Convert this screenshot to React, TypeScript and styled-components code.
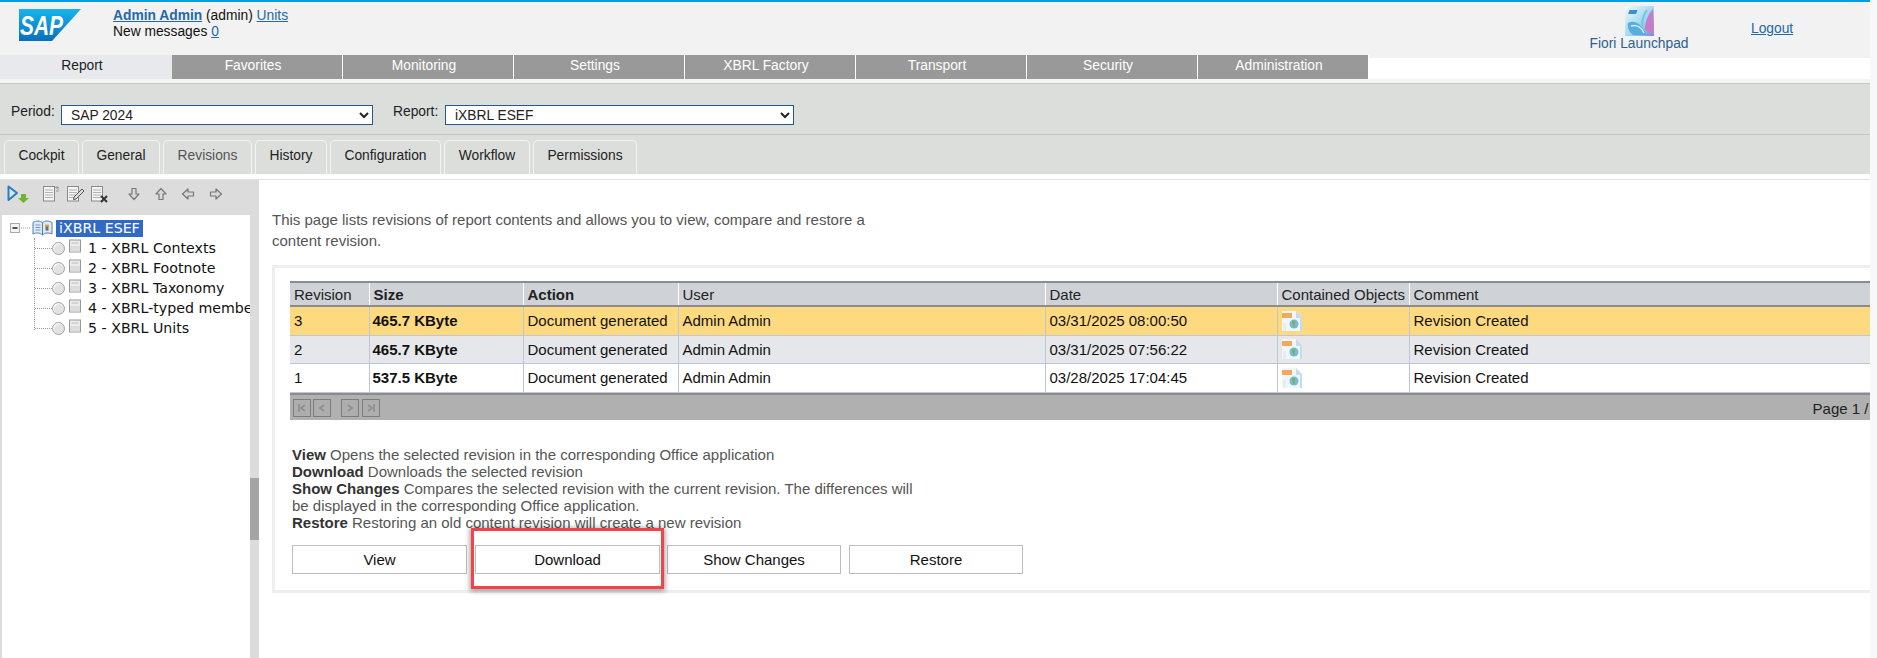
import React from "react";
import styled, { createGlobalStyle } from "styled-components";

const Global = createGlobalStyle`
  html, body { margin: 0; padding: 0; background: #fff; overflow: hidden; }
  #root { width: 1877px; height: 658px; }
  * { box-sizing: border-box; }
`;

const Screen = styled.div`
  display: flex;
  width: 1877px;
  height: 658px;
  overflow: hidden;
  font-family: "Liberation Sans", Arial, sans-serif;
  font-size: 13.8px;
  color: #111;
`;
const Page = styled.div`
  display: flex;
  flex-direction: column;
  width: 1870px;
  height: 658px;
  overflow: hidden;
`;
const PageScroll = styled.div`
  width: 7px;
  background: #f8f8f8;
`;

const Header = styled.header`
  display: flex;
  height: 55px;
  flex: none;
  border-top: 2px solid #009de0;
  background: #f2f2f2;
`;
const LogoBox = styled.div`
  width: 113px;
  padding: 7px 0 0 19px;
`;
const UserBox = styled.div`
  padding-top: 6px;
  line-height: 16px;
  flex: 1;
`;
const Link = styled.a<{ $bold?: boolean }>`
  color: #2368a8;
  text-decoration: underline;
  font-weight: ${(p) => (p.$bold ? 700 : 400)};
`;
const FioriBox = styled.div`
  display: flex;
  flex-direction: column;
  align-items: center;
  width: 98px;
  padding-top: 4px;
  margin-right: 63px;
  color: #2d5f92;
  line-height: 15px;
  white-space: nowrap;
`;
const LogoutBox = styled.div`
  width: 119px;
  padding-top: 19px;
  line-height: 16px;
`;

const MainTabs = styled.nav`
  display: flex;
  height: 24px;
  flex: none;
`;
const MainTab = styled.div<{ $active?: boolean }>`
  width: ${(p) => (p.$active ? "172px" : "170px")};
  margin-right: ${(p) => (p.$active ? 0 : "1px")};
  padding-right: 8px;
  background: ${(p) => (p.$active ? "#e8e9ec" : "#999999")};
  color: ${(p) => (p.$active ? "#222" : "#fff")};
  text-align: center;
  line-height: 22px;
`;
const TabFiller = styled.div`
  flex: 1;
  background: #fff;
  border-top: 3px solid #f2f2f2;
`;
const TabStrip = styled.div`
  height: 5px;
  flex: none;
  background: #f4f4f4;
  border-bottom: 1px solid #c6c8c8;
`;

const FilterBar = styled.div`
  display: flex;
  align-items: flex-start;
  height: 51px;
  flex: none;
  padding: 21px 0 0 11px;
  background: #dcdedc;
  border-bottom: 1px solid #c4c6c4;
`;
const FilterLabel = styled.label<{ $width: number }>`
  width: ${(p) => p.$width}px;
  margin-top: -1px;
  line-height: 15px;
  color: #222;
`;
const FilterSelect = styled.select<{ $width: number; $gap?: number }>`
  width: ${(p) => p.$width}px;
  height: 20px;
  margin-right: ${(p) => p.$gap ?? 0}px;
  padding: 0 0 0 5px;
  border: 1px solid #23598f;
  border-radius: 0;
  background-color: #fff;
  font-family: "Liberation Sans", Arial, sans-serif;
  font-size: 13.8px;
  color: #222;
`;

const SubTabBar = styled.div`
  display: flex;
  gap: 3px;
  height: 39px;
  flex: none;
  padding: 5px 0 0 4px;
  background: #dcdedc;
`;
const SubTab = styled.div<{ $width: number; $active?: boolean }>`
  width: ${(p) => p.$width}px;
  border: 1px solid #f3f3f3;
  border-bottom: none;
  border-radius: 5px 5px 0 0;
  text-align: center;
  line-height: 30px;
  color: ${(p) => (p.$active ? "#555" : "#222")};
`;
const SubStrip = styled.div`
  height: 6px;
  flex: none;
  background: #fff;
  border-bottom: 1px solid #e3e3e3;
`;

const Body = styled.div`
  display: flex;
  flex: 1;
  min-height: 0;
`;
const Sidebar = styled.aside`
  display: flex;
  flex-direction: column;
  width: 250px;
  flex: none;
  padding-left: 2px;
  background: #dcdcdc;
`;
const Toolbar = styled.div`
  display: flex;
  align-items: center;
  height: 33px;
  flex: none;
  padding: 0 0 6px 5px;
`;
const ToolGap = styled.span<{ $w: number }>`
  display: inline-block;
  width: ${(p) => p.$w}px;
`;
const Tree = styled.div`
  flex: 1;
  margin-top: 2px;
  padding-top: 3px;
  background: #fff;
  font-family: "DejaVu Sans", Verdana, sans-serif;
  font-size: 14.2px;
  overflow: hidden;
  white-space: nowrap;
`;
const TreeRoot = styled.div`
  display: flex;
  align-items: center;
  height: 20px;
  padding-left: 6px;
`;
const RootLabel = styled.span`
  margin-left: 3px;
  padding: 0 3px;
  height: 17px;
  line-height: 17px;
  background: #316ac5;
  color: #fff;
`;
const TreeChildren = styled.div`
  margin-left: 32px;
  border-left: 1px dotted #999;
  height: 92px;
`;
const TreeRow = styled.div`
  display: flex;
  align-items: center;
  height: 20px;
  color: #111;
`;
const Dots = styled.span`
  width: 17px;
  flex: none;
  border-top: 1px dotted #999;
`;
const Radio = styled.span`
  width: 13px;
  height: 13px;
  flex: none;
  border-radius: 50%;
  background: #e2e2e2;
  border: 1px solid #a2a2a2;
  box-shadow: inset 1px 1px 1px #fff;
`;
const RowIcon = styled.span`
  display: flex;
  flex: none;
  margin: 0 0 5px 3px;
`;
const RowLabel = styled.span`
  flex: none;
  margin-left: 6px;
`;
const ScrollTrack = styled.div`
  display: flex;
  flex-direction: column;
  width: 9px;
  flex: none;
  padding-top: 298px;
  background: #dcdcdc;
`;
const ScrollThumb = styled.div`
  height: 62px;
  background: #a4a4a4;
`;

const Main = styled.main`
  flex: 1;
  min-width: 0;
  padding: 29px 0 0 13px;
  overflow: hidden;
  font-size: 15px;
`;
const Intro = styled.p`
  width: 610px;
  margin: 0 0 14px;
  line-height: 21px;
  color: #555;
`;
const Card = styled.section`
  position: relative;
  width: 1640px;
  height: 328px;
  padding: 13px 0 0 15px;
  border: 3px solid #eeeeee;
`;
const GridTable = styled.table`
  width: 1600px;
  table-layout: fixed;
  border-collapse: collapse;
`;
const HeadRow = styled.tr`
  height: 24px;
  background: #cfd3d7;
  border-top: 2px solid #8c8c8c;
  border-bottom: 2px solid #8c8c8c;
`;
const HeadCell = styled.th<{ $bold?: boolean }>`
  padding: 0 4px;
  border-right: 1px solid #fff;
  text-align: left;
  font-weight: ${(p) => (p.$bold ? 700 : 400)};
  color: #222;
  white-space: nowrap;
`;
const DataRow = styled.tr<{ $bg: string; $h: number }>`
  height: ${(p) => p.$h}px;
  background: ${(p) => p.$bg};
  border-bottom: 1px solid #bcc6da;
`;
const Cell = styled.td<{ $bold?: boolean }>`
  padding: 0 4px 0 ${(p) => (p.$bold ? 3 : 4)}px;
  border-right: 1px solid #bcc6da;
  font-weight: ${(p) => (p.$bold ? 700 : 400)};
  color: #111;
  white-space: nowrap;
  svg { display: block; }
`;
const Pager = styled.div`
  display: flex;
  align-items: flex-start;
  width: 1600px;
  height: 27px;
  padding: 4px 9px 0 3px;
  background: #b0b0b0;
  border-top: 2px solid #8c8c8c;
`;
const PagerButton = styled.span<{ $gapRight: number }>`
  display: flex;
  align-items: center;
  justify-content: center;
  width: 18px;
  height: 18px;
  margin-right: ${(p) => p.$gapRight}px;
  border: 1px solid #7c7c7c;
  background: #aeaeae;
`;
const PageInfo = styled.span`
  margin-left: auto;
  margin-top: 1px;
  color: #222;
`;
const Help = styled.div`
  margin: 26px 0 14px 2px;
  width: 630px;
  line-height: 17px;
  color: #555;
`;
const HelpKey = styled.b`
  color: #333;
`;
const Buttons = styled.div`
  display: flex;
  margin-left: 2px;
`;
const ActionButton = styled.div<{ $width: number; $gap: number }>`
  width: ${(p) => p.$width}px;
  height: 29px;
  margin-right: ${(p) => p.$gap}px;
  border: 1px solid #bdbdbd;
  background: #fff;
  text-align: center;
  line-height: 27px;
  color: #111;
`;
const Highlight = styled.div`
  position: absolute;
  left: 196px;
  top: 260px;
  width: 193px;
  height: 61px;
  border: 3px solid #f44348;
  box-shadow: 0 1px 5px 1px rgba(0, 0, 0, 0.4);
`;

const SapLogo = () => (
  <svg width="63" height="33" viewBox="0 0 63 33">
    <defs>
      <linearGradient id="sapg" x1="0" y1="0" x2="0" y2="1">
        <stop offset="0" stopColor="#16b5ee" />
        <stop offset="1" stopColor="#0a6fbd" />
      </linearGradient>
    </defs>
    <polygon points="0,0 62,0 33,32 0,32" fill="url(#sapg)" />
    <text x="1" y="26" fontFamily="Liberation Sans" fontWeight="700" fontStyle="italic" fontSize="28" textLength="43" lengthAdjust="spacingAndGlyphs" fill="#fff">SAP</text>
  </svg>
);

const FioriIcon = () => (
  <svg width="29" height="30" viewBox="0 0 29 30">
    <defs>
      <linearGradient id="fg" x1="0" y1="0" x2="1" y2="1">
        <stop offset="0" stopColor="#f4fafc" />
        <stop offset="0.6" stopColor="#9ad4ec" />
        <stop offset="1" stopColor="#7d86d8" />
      </linearGradient>
    </defs>
    <rect width="29" height="30" fill="url(#fg)" />
    <path d="M3 17 C10 13 17 19 22 29 L8 29 C4 26 2 21 3 17Z" fill="#55aedd" />
    <path d="M6 20 C12 18 17 22 19 27" fill="none" stroke="#d6eef8" strokeWidth="1.5" />
    <path d="M20 24 C20 16 23 8 28 3 L29 28 Z" fill="#c77cc7" />
    <path d="M17 20 C17 13 19 8 22 4" fill="none" stroke="#6cc6e6" strokeWidth="2" />
    <rect x="4" y="4" width="8" height="4" fill="#3d8fc8" transform="skewX(-20) translate(2 0)" />
  </svg>
);

const PlayDown = () => (
  <svg width="24" height="18" viewBox="0 0 24 18">
    <path d="M1.5 1.5 L10 8 L1.5 15 Z" fill="#d5e6f5" stroke="#2c7fb8" strokeWidth="2" strokeLinejoin="round" />
    <path d="M14 9h5v4h3l-5.5 5-5.5-5h3z" fill="#6cb52d" />
  </svg>
);

const Sheet = ({ kind }: { kind: "new" | "edit" | "del" }) => (
  <svg width="19" height="18" viewBox="0 0 19 18">
    <rect x="1.5" y="1.5" width="11" height="14.5" fill="#f4f4f4" stroke="#8a8a8a" />
    <path d="M3.5 5h7M3.5 7.5h7M3.5 10h7M3.5 12.5h7" stroke="#707070" strokeWidth="1" strokeDasharray="1 1" />
    {kind === "new" && <path d="M15 1v3M13 2.5l4 0M14 6h3M17 3.5l-1.5 1.5" stroke="#9a9a9a" />}
    {kind === "edit" && <path d="M8 12 L16 4 L18 6 L10 14 L7.5 14.5 Z" fill="#dcdcdc" stroke="#555" />}
    {kind === "del" && <path d="M11 11l6 6M17 11l-6 6" stroke="#333" strokeWidth="2" />}
  </svg>
);

const Arrow = ({ rot }: { rot: number }) => (
  <svg width="14" height="14" viewBox="0 0 14 14">
    <path d="M5 1.5h4v5.5h3L7 12.5 2 7h3z" fill="#d9d9d9" stroke="#777" strokeWidth="1.2" strokeLinejoin="round" transform={`rotate(${rot} 7 7)`} />
  </svg>
);

const ExpandBox = () => (
  <svg width="24" height="14" viewBox="0 0 24 14">
    <rect x="2.5" y="2.5" width="9" height="9" fill="#f4f4f4" stroke="#aaa" />
    <path d="M4.5 7h5" stroke="#111" strokeWidth="1.4" />
    <path d="M13 7h10" stroke="#999" strokeDasharray="1 1" />
  </svg>
);

const BookIcon = () => (
  <svg width="21" height="17" viewBox="0 0 21 17">
    <path d="M1 2.5 C4 .5 8 .5 10.5 2.5 C13 .5 17 .5 20 2.5 L20 14 C17 12.5 13 12.5 10.5 15 C8 12.5 4 12.5 1 14 Z" fill="#dce9f7" stroke="#4f7fb5" />
    <path d="M10.5 2.5V15" stroke="#4f7fb5" />
    <path d="M3.5 5h5M3.5 7.5h5M3.5 10h5" stroke="#7d96b5" />
    <rect x="13" y="4.5" width="4" height="6" fill="#e8a52d" />
    <rect x="14" y="6.5" width="2" height="4" fill="#3a77c0" />
  </svg>
);

const PageIcon = () => (
  <svg width="14" height="14" viewBox="0 0 14 14">
    <rect x="1.5" y="1" width="11" height="12" fill="#ececec" stroke="#9a9a9a" />
    <path d="M3.5 4h7" stroke="#bdbdbd" />
    <path d="M2 7h10v5.5H2z" fill="#dcdcdc" />
  </svg>
);

const ObjectIcon = () => (
  <svg width="20" height="20" viewBox="0 0 20 20">
    <path d="M0 0h14l6 6v14H0z" fill="#f1f6fb" />
    <path d="M14 0l6 6v14h-2V7h-4z" fill="#c6dcee" />
    <path d="M1 12h3v8H1z" fill="#e3eef7" />
    <rect x="0" y="2" width="10" height="5" fill="#f2a95c" />
    <circle cx="12" cy="13" r="4.5" fill="#7ab8dd" />
    <path d="M10.5 10c2.500-1 3.500 1 2.500 2.500s1 2.500-1 4.500c-1.500-1-.5-2.500-1.500-3.500s-.8-2.500 0-3.500z" fill="#72b85e" />
  </svg>
);

const PagerGlyph = ({ d }: { d: string }) => (
  <svg width="10" height="10" viewBox="0 0 10 10">
    <path d={d} fill="none" stroke="#8e8e8e" strokeWidth="1.6" />
  </svg>
);

const mainTabs = ["Favorites", "Monitoring", "Settings", "XBRL Factory", "Transport", "Security", "Administration"];
const subTabs: [string, number][] = [
  ["Cockpit", 75], ["General", 78], ["Revisions", 89], ["History", 72],
  ["Configuration", 111], ["Workflow", 86], ["Permissions", 104],
];
const treeItems = ["1 - XBRL Contexts", "2 - XBRL Footnote", "3 - XBRL Taxonomy", "4 - XBRL-typed membe", "5 - XBRL Units"];
const columns: [string, number, boolean][] = [
  ["Revision", 79, false], ["Size", 154, true], ["Action", 155, true], ["User", 367, false],
  ["Date", 232, false], ["Contained Objects", 132, false], ["Comment", 481, false],
];
const revisions = [
  { rev: "3", size: "465.7 KByte", date: "03/31/2025 08:00:50", bg: "#fdd97f", h: 29 },
  { rev: "2", size: "465.7 KByte", date: "03/31/2025 07:56:22", bg: "#e6e7eb", h: 28 },
  { rev: "1", size: "537.5 KByte", date: "03/28/2025 17:04:45", bg: "#ffffff", h: 29 },
];
const pagerGlyphs: [string, number][] = [
  ["M2 1v8M8 2L4 5l4 3", 2],
  ["M7 2L3 5l4 3", 10],
  ["M3 2l4 3-4 3", 3],
  ["M8 1v8M2 2l4 3-4 3", 0],
];
const actionButtons: [string, number, number][] = [
  ["View", 175, 8], ["Download", 185, 7], ["Show Changes", 174, 8], ["Restore", 174, 0],
];

export default function App() {
  return (
    <Screen>
      <Global />
      <Page>
        <Header>
          <LogoBox><SapLogo /></LogoBox>
          <UserBox>
            <div><Link $bold>Admin Admin</Link> (admin) <Link>Units</Link></div>
            <div>New messages <Link>0</Link></div>
          </UserBox>
          <FioriBox><FioriIcon />Fiori Launchpad</FioriBox>
          <LogoutBox><Link>Logout</Link></LogoutBox>
        </Header>
        <MainTabs>
          <MainTab $active>Report</MainTab>
          {mainTabs.map((t) => <MainTab key={t}>{t}</MainTab>)}
          <TabFiller />
        </MainTabs>
        <TabStrip />
        <FilterBar>
          <FilterLabel $width={50}>Period:</FilterLabel>
          <FilterSelect $width={312} $gap={20} defaultValue="SAP 2024"><option>SAP 2024</option></FilterSelect>
          <FilterLabel $width={52}>Report:</FilterLabel>
          <FilterSelect $width={349} defaultValue="iXBRL ESEF"><option>iXBRL ESEF</option></FilterSelect>
        </FilterBar>
        <SubTabBar>
          {subTabs.map(([t, w]) => <SubTab key={t} $width={w} $active={t === "Revisions"}>{t}</SubTab>)}
        </SubTabBar>
        <SubStrip />
        <Body>
          <Sidebar>
            <Toolbar>
              <PlayDown />
              <ToolGap $w={11} /><Sheet kind="new" />
              <ToolGap $w={5} /><Sheet kind="edit" />
              <ToolGap $w={5} /><Sheet kind="del" />
              <ToolGap $w={18} /><Arrow rot={0} />
              <ToolGap $w={13} /><Arrow rot={180} />
              <ToolGap $w={13} /><Arrow rot={90} />
              <ToolGap $w={14} /><Arrow rot={270} />
            </Toolbar>
            <Tree>
              <TreeRoot><ExpandBox /><BookIcon /><RootLabel>iXBRL ESEF</RootLabel></TreeRoot>
              <TreeChildren>
                {treeItems.map((item) => (
                  <TreeRow key={item}><Dots /><Radio /><RowIcon><PageIcon /></RowIcon><RowLabel>{item}</RowLabel></TreeRow>
                ))}
              </TreeChildren>
            </Tree>
          </Sidebar>
          <ScrollTrack><ScrollThumb /></ScrollTrack>
          <Main>
            <Intro>This page lists revisions of report contents and allows you to view, compare and restore a content revision.</Intro>
            <Card>
              <GridTable>
                <colgroup>
                  {columns.map(([n, w]) => <col key={n} width={w} />)}
                </colgroup>
                <thead>
                  <HeadRow>
                    {columns.map(([n, , b]) => <HeadCell key={n} $bold={b}>{n}</HeadCell>)}
                  </HeadRow>
                </thead>
                <tbody>
                  {revisions.map((r) => (
                    <DataRow key={r.rev} $bg={r.bg} $h={r.h}>
                      <Cell>{r.rev}</Cell>
                      <Cell $bold>{r.size}</Cell>
                      <Cell>Document generated</Cell>
                      <Cell>Admin Admin</Cell>
                      <Cell>{r.date}</Cell>
                      <Cell><ObjectIcon /></Cell>
                      <Cell>Revision Created</Cell>
                    </DataRow>
                  ))}
                </tbody>
              </GridTable>
              <Pager>
                {pagerGlyphs.map(([d, gap]) => (
                  <PagerButton key={d} $gapRight={gap}><PagerGlyph d={d} /></PagerButton>
                ))}
                <PageInfo>Page 1 / 1</PageInfo>
              </Pager>
              <Help>
                <HelpKey>View</HelpKey> Opens the selected revision in the corresponding Office application<br />
                <HelpKey>Download</HelpKey> Downloads the selected revision<br />
                <HelpKey>Show Changes</HelpKey> Compares the selected revision with the current revision. The differences will be displayed in the corresponding Office application.<br />
                <HelpKey>Restore</HelpKey> Restoring an old content revision will create a new revision
              </Help>
              <Buttons>
                {actionButtons.map(([t, w, g]) => <ActionButton key={t} $width={w} $gap={g}>{t}</ActionButton>)}
              </Buttons>
              <Highlight />
            </Card>
          </Main>
        </Body>
      </Page>
      <PageScroll />
    </Screen>
  );
}
